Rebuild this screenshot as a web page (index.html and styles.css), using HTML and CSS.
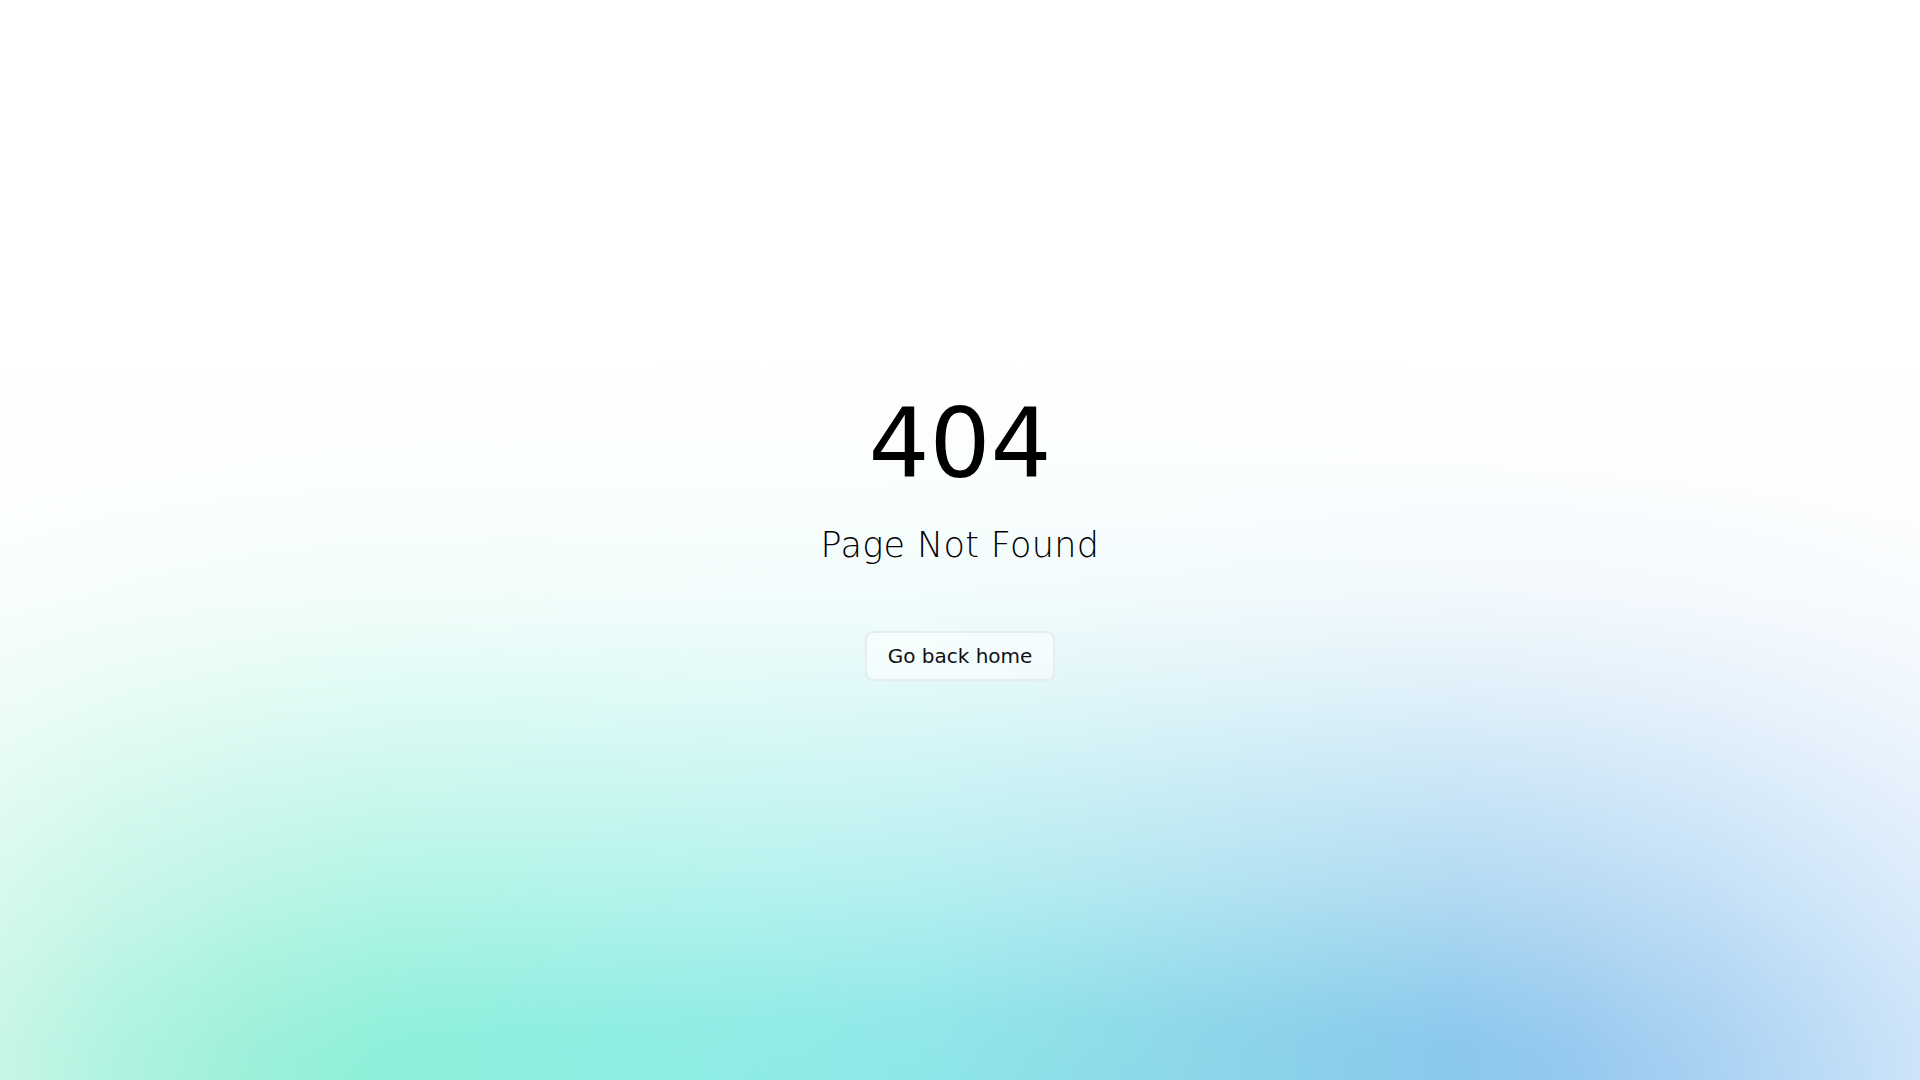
FILE: index.html
```html
<!DOCTYPE html>
<html lang="en">
<head>
<meta charset="utf-8">
<title>404 - Page Not Found</title>
<link rel="stylesheet" href="styles.css">
</head>
<body>
<main class="notfound">
  <h1 class="notfound-code">404</h1>
  <h2 class="notfound-title">Page Not Found</h2>
  <a class="notfound-button" href="#">Go back home</a>
</main>
</body>
</html>
```
FILE: styles.css
```css
html, body {
  margin: 0;
  padding: 0;
  height: 100%;
}

body {
  font-family: "DejaVu Sans", "Noto Sans", sans-serif;
  color: #000;
  background-color: #fff;
  background-image:
    radial-gradient(ellipse 400% 72% at 50% 100%,
      rgba(255,255,255,0) 0%,
      rgba(255,255,255,0.04) 8%,
      rgba(255,255,255,0.35) 25%,
      rgba(255,255,255,0.73) 50%,
      rgba(255,255,255,0.89) 63%,
      rgba(255,255,255,0.96) 77%,
      rgba(255,255,255,1) 92%),
    linear-gradient(90deg,
      #bff5e4 0%,
      #a8f2dd 6%,
      #96efd8 13%,
      #8aefd9 20%,
      #8aeedd 26%,
      #8cede1 32%,
      #8eebe5 40%,
      #8ee7e8 48%,
      #8cdee8 56%,
      #8ad5ea 63%,
      #87cdea 70%,
      #88c6ec 76%,
      #92c7ee 82%,
      #a2cef2 89%,
      #b5d8f5 95%,
      #c6e0f8 100%);
  background-repeat: no-repeat;
}

.notfound {
  box-sizing: border-box;
  min-height: 100vh;
  padding-bottom: 3px;
  display: flex;
  flex-direction: column;
  align-items: center;
  justify-content: center;
  text-align: center;
}

.notfound-code {
  margin: 0;
  font-size: 96px;
  font-weight: 400;
  line-height: 1;
  color: #000;
}

.notfound-title {
  margin: 27px 0 0;
  font-size: 35px;
  font-weight: 200;
  line-height: 1.5;
  letter-spacing: 0.01em;
  color: #000;
}

.notfound-button {
  margin-top: 60px;
  display: inline-block;
  padding: 7px 21px;
  font-size: 20px;
  line-height: 32px;
  color: #111;
  text-decoration: none;
  background: rgba(255,255,255,0.55);
  border: 2px solid rgba(228,234,236,0.85);
  border-radius: 8px;
}
```
